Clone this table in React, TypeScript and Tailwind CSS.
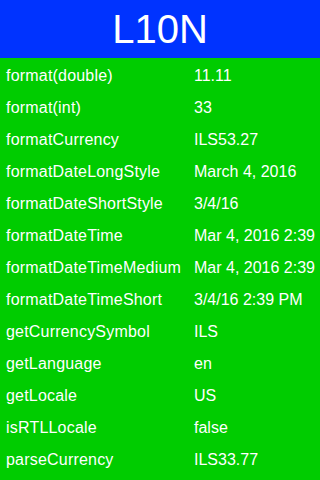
const rows: [string, string][] = [
  ["format(double)", "11.11"],
  ["format(int)", "33"],
  ["formatCurrency", "ILS53.27"],
  ["formatDateLongStyle", "March 4, 2016"],
  ["formatDateShortStyle", "3/4/16"],
  ["formatDateTime", "Mar 4, 2016 2:39"],
  ["formatDateTimeMedium", "Mar 4, 2016 2:39"],
  ["formatDateTimeShort", "3/4/16 2:39 PM"],
  ["getCurrencySymbol", "ILS"],
  ["getLanguage", "en"],
  ["getLocale", "US"],
  ["isRTLLocale", "false"],
  ["parseCurrency", "ILS33.77"],
];

export default function App() {
  return (
    <div
      className="w-[320px] h-[480px] bg-[#00cc00] text-white overflow-hidden"
      style={{ fontFamily: '"Liberation Sans", Arial, sans-serif' }}
    >
      <div className="h-[58px] bg-[#0033ff] flex items-center justify-center text-[40px] leading-none">
        L10N
      </div>
      <div className="flex flex-col pt-[2px]">
        {rows.map(([k, v]) => (
          <div key={k} className="h-[32px] flex items-center text-[16px] whitespace-nowrap">
            <span className="w-[194px] pl-[6px] tracking-[0.2px]">{k}</span>
            <span>{v}</span>
          </div>
        ))}
      </div>
    </div>
  );
}
